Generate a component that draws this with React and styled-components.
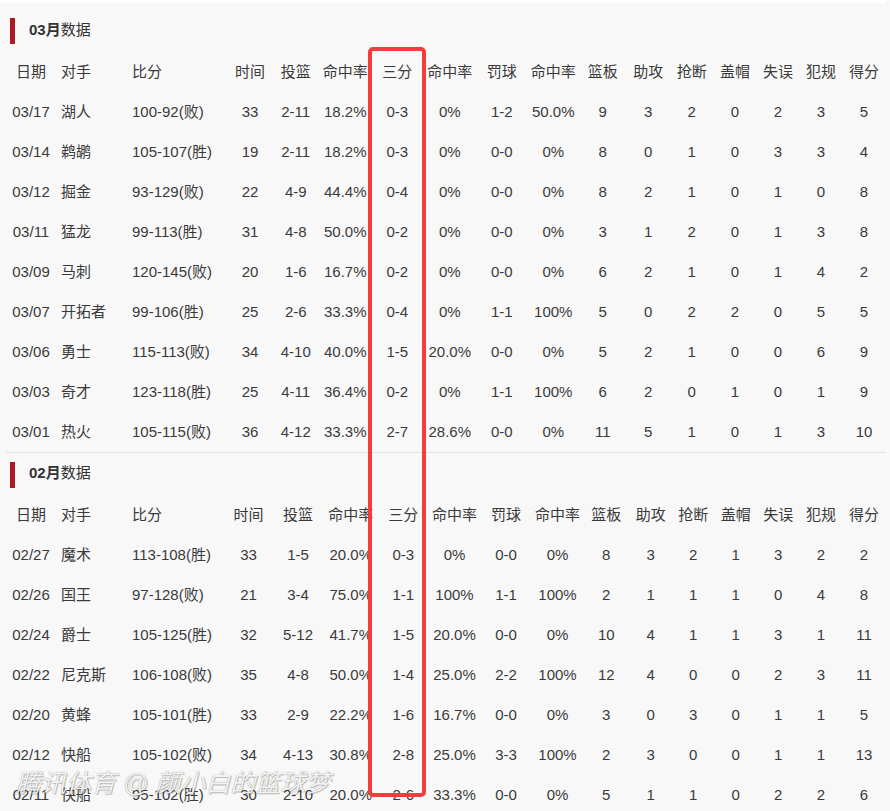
import React from "react";
import styled, { createGlobalStyle } from "styled-components";

const GlobalStyle = createGlobalStyle`
  body {
    margin: 0;
    background: #f8f8f8;
    font-family: "Liberation Sans", Arial, "Noto Sans CJK SC", sans-serif;
    color: #3a3a3a;
  }
`;

const HEADERS = [
  "日期", "对手", "比分", "时间", "投篮", "命中率", "三分", "命中率", "罚球",
  "命中率", "篮板", "助攻", "抢断", "盖帽", "失误", "犯规", "得分",
];

const marchCols = [50, 71, 101, 44, 47.5, 51.5, 52.5, 52.5, 51.5, 51.5, 47.5, 43.5, 43.5, 43, 43, 43, 43];
const febCols = [50, 71, 98, 47, 52, 53.5, 51.5, 51, 52, 51, 46.5, 42.5, 42.5, 42.5, 42.5, 43, 43];

const march = [
  "03/17 湖人 100-92(败) 33 2-11 18.2% 0-3 0% 1-2 50.0% 9 3 2 0 2 3 5",
  "03/14 鹈鹕 105-107(胜) 19 2-11 18.2% 0-3 0% 0-0 0% 8 0 1 0 3 3 4",
  "03/12 掘金 93-129(败) 22 4-9 44.4% 0-4 0% 0-0 0% 8 2 1 0 1 0 8",
  "03/11 猛龙 99-113(胜) 31 4-8 50.0% 0-2 0% 0-0 0% 3 1 2 0 1 3 8",
  "03/09 马刺 120-145(败) 20 1-6 16.7% 0-2 0% 0-0 0% 6 2 1 0 1 4 2",
  "03/07 开拓者 99-106(胜) 25 2-6 33.3% 0-4 0% 1-1 100% 5 0 2 2 0 5 5",
  "03/06 勇士 115-113(败) 34 4-10 40.0% 1-5 20.0% 0-0 0% 5 2 1 0 0 6 9",
  "03/03 奇才 123-118(胜) 25 4-11 36.4% 0-2 0% 1-1 100% 6 2 0 1 0 1 9",
  "03/01 热火 105-115(败) 36 4-12 33.3% 2-7 28.6% 0-0 0% 11 5 1 0 1 3 10",
].map((r) => r.split(" "));

const february = [
  "02/27 魔术 113-108(胜) 33 1-5 20.0% 0-3 0% 0-0 0% 8 3 2 1 3 2 2",
  "02/26 国王 97-128(败) 21 3-4 75.0% 1-1 100% 1-1 100% 2 1 1 1 0 4 8",
  "02/24 爵士 105-125(胜) 32 5-12 41.7% 1-5 20.0% 0-0 0% 10 4 1 1 3 1 11",
  "02/22 尼克斯 106-108(败) 35 4-8 50.0% 1-4 25.0% 2-2 100% 12 4 0 0 2 3 11",
  "02/20 黄蜂 105-101(胜) 33 2-9 22.2% 1-6 16.7% 0-0 0% 3 0 3 0 1 1 5",
  "02/12 快船 105-102(败) 34 4-13 30.8% 2-8 25.0% 3-3 100% 2 3 0 0 1 1 13",
  "02/11 快船 95-102(胜) 30 2-10 20.0% 2-6 33.3% 0-0 0% 5 1 1 0 2 2 6",
].map((r) => r.split(" "));

const Page = styled.div`
  position: relative;
  width: 890px;
  height: 811px;
  overflow: hidden;
`;

const TopStrip = styled.div`
  width: 886px;
  height: 3px;
  background: #fff;
`;

const Title = styled.div`
  display: flex;
  align-items: center;
  gap: 14px;
  padding: ${(p) => (p.$first ? "15px 0 8px" : "8px 0 7px")} 10px;
  font-size: 15px;
  color: #333;
  &::before {
    content: "";
    width: 5px;
    height: 26px;
    background: #a91d22;
  }
  span {
    margin-bottom: ${(p) => (p.$first ? "5px" : "6px")};
  }
  b {
    font-weight: 700;
  }
`;

const Table = styled.table`
  margin-left: 6px;
  width: 879.5px;
  table-layout: fixed;
  border-collapse: collapse;
  font-size: 15px;
`;

const Cell = styled.td`
  height: 40px;
  padding: 0 0 0 ${(p) => (p.$left ? "5px" : "0")};
  text-align: ${(p) => (p.$left ? "left" : "center")};
  font-weight: 400;
  white-space: nowrap;
  line-height: 20px;
`;

const Divider = styled.div`
  margin-left: 6px;
  width: 880px;
  height: 1px;
  background: #e4e4e4;
`;

const Highlight = styled.div`
  position: absolute;
  left: 368px;
  top: 47px;
  width: 58px;
  height: 750px;
  box-sizing: border-box;
  border: 4.5px solid #f63b3d;
  border-radius: 5px;
  pointer-events: none;
`;

const Watermark = styled.div`
  position: absolute;
  left: 16px;
  top: 768px;
  font-size: 25px;
  font-style: italic;
  line-height: 30px;
  color: rgba(255, 255, 255, 0.92);
  text-shadow: 0 0 1px rgba(0, 0, 0, 0.45), 1px 1px 1px rgba(0, 0, 0, 0.2);
  white-space: nowrap;
`;

const StatTable = ({ cols, rows }) => (
  <Table>
    <colgroup>
      {cols.map((w, i) => (
        <col key={i} style={{ width: w }} />
      ))}
    </colgroup>
    <tbody>
      <tr>
        {HEADERS.map((h, i) => (
          <Cell as="th" key={i} $left={i === 1 || i === 2}>
            {h}
          </Cell>
        ))}
      </tr>
      {rows.map((r, ri) => (
        <tr key={ri}>
          {r.map((v, i) => (
            <Cell key={i} $left={i === 1 || i === 2}>
              {v}
            </Cell>
          ))}
        </tr>
      ))}
    </tbody>
  </Table>
);

const App = () => (
  <>
    <GlobalStyle />
    <Page>
      <TopStrip />
      <Title $first>
        <span>
          <b>03月</b>数据
        </span>
      </Title>
      <StatTable cols={marchCols} rows={march} />
      <Divider />
      <Title>
        <span>
          <b>02月</b>数据
        </span>
      </Title>
      <StatTable cols={febCols} rows={february} />
      <Highlight />
      <Watermark>腾讯体育 @ 颜小白的篮球梦</Watermark>
    </Page>
  </>
);

export default App;
